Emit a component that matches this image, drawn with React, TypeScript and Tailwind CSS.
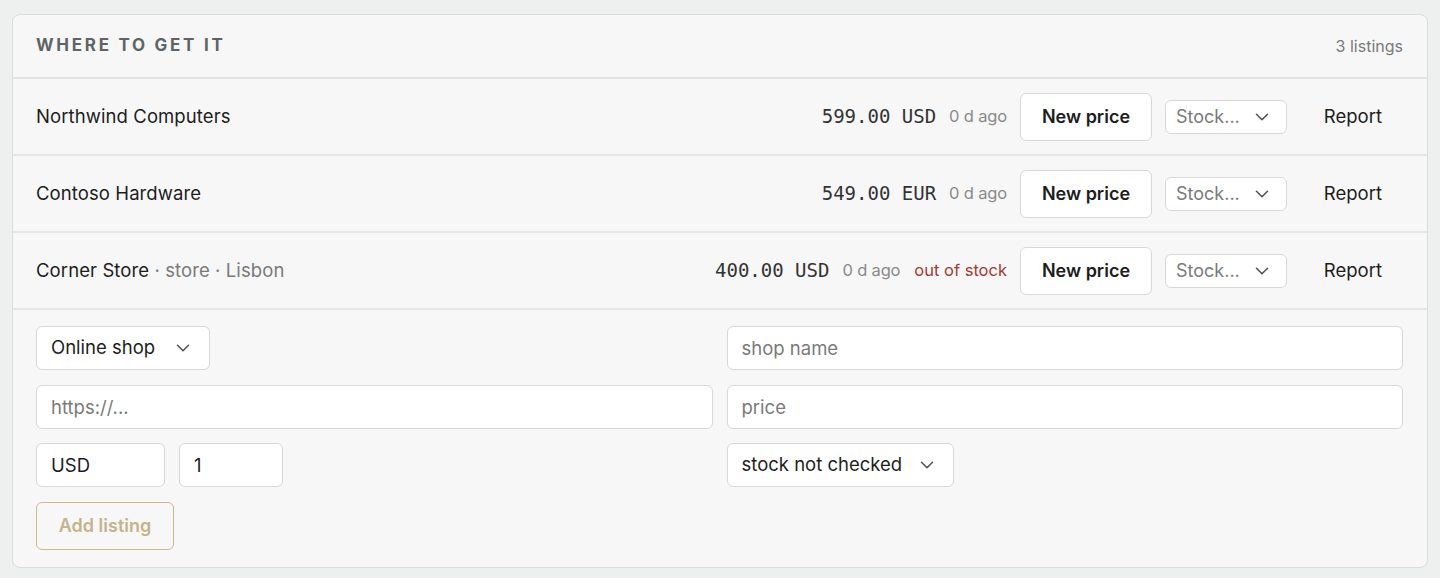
import { ChevronDown } from "lucide-react"

type Listing = {
  name: string
  meta?: string
  price: string
  age: string
  stock?: string
}

const listings: Listing[] = [
  { name: "Northwind Computers", price: "599.00 USD", age: "0 d ago" },
  { name: "Contoso Hardware", price: "549.00 EUR", age: "0 d ago" },
  { name: "Corner Store", meta: " · store · Lisbon", price: "400.00 USD", age: "0 d ago", stock: "out of stock" },
]

const font = { fontFamily: "Inter, 'Liberation Sans', sans-serif" }

function FakeSelect({ label, className, muted }: { label: string; className: string; muted?: boolean }) {
  return (
    <div
      className={`flex items-center justify-between rounded-md border border-[#d8d8d8] bg-white ${className}`}
    >
      <span className={muted ? "text-[#7a7a7a]" : "text-[#1d1d1d]"}>{label}</span>
      <ChevronDown size={22} strokeWidth={1.75} className="text-[#555]" />
    </div>
  )
}

function ListingRow({ item }: { item: Listing }) {
  return (
    <div className="flex h-[77px] items-center justify-between border-b-2 border-[#e6e6e6] pl-[23px] pr-6">
      <div className="text-[18.5px] tracking-[0.005em] text-[#1d1d1d]">
        {item.name}
        {item.meta && <span className="text-[#7a7a7a]">{item.meta}</span>}
      </div>
      <div className="flex items-center">
        <span className="font-['DejaVu_Sans_Mono',monospace] text-[19px] text-[#333]">{item.price}</span>
        <span className="ml-[13px] text-[16.5px] tracking-[-0.01em] text-[#8a8a8a]">{item.age}</span>
        {item.stock && <span className="ml-[14px] text-[16.5px] text-[#a33a2f]">{item.stock}</span>}
        <button className="ml-[13px] h-[48px] w-[132px] rounded-md border border-[#d8d8d8] bg-white text-[18px] font-semibold text-[#1d1d1d]">
          New price
        </button>
        <FakeSelect label="Stock..." muted className="ml-[13px] h-[34px] w-[122px] pl-[10px] pr-[13px] text-[18px]" />
        <button className="ml-[19px] w-[97px] pr-[21px] text-right text-[18.5px] text-[#1d1d1d]">Report</button>
      </div>
    </div>
  )
}

export default function App() {
  return (
    <div style={font} className="min-h-[578px] bg-[#eef0ef] px-3 pt-[14px] pb-[10px]">
      <div className="overflow-hidden rounded-lg border border-[#dcdcdc] bg-[#f7f7f7]">
        {/* header */}
        <div className="flex h-[64px] items-center justify-between border-b-2 border-[#e3e3e3] pl-[23px] pr-6">
          <h2 className="text-[17px] font-bold uppercase tracking-[0.16em] text-[#5d6466]">Where to get it</h2>
          <span className="text-[16px] text-[#7a7a7a]">3 listings</span>
        </div>

        {listings.map((item) => (
          <ListingRow key={item.name} item={item} />
        ))}

        {/* new listing form */}
        <div className="flex flex-col gap-[14.5px] pl-[23px] pr-6 pt-[16px] pb-[17px] text-[18.5px]">
          <div className="grid grid-cols-2 gap-x-[14px]">
            <FakeSelect label="Online shop" className="h-[44px] w-[174px] pl-[14px] pr-[15px]" />
            <input
              placeholder="shop name"
              className="h-[44px] rounded-md border border-[#d8d8d8] bg-white px-[14px] text-[#1d1d1d] placeholder:text-[#7a7a7a]"
            />
          </div>
          <div className="grid grid-cols-2 gap-x-[14px]">
            <input
              placeholder="https://..."
              className="h-[44px] rounded-md border border-[#d8d8d8] bg-white px-[14px] text-[#1d1d1d] placeholder:text-[#7a7a7a]"
            />
            <input
              placeholder="price"
              className="h-[44px] rounded-md border border-[#d8d8d8] bg-white px-[14px] text-[#1d1d1d] placeholder:text-[#7a7a7a]"
            />
          </div>
          <div className="grid grid-cols-2 gap-x-[14px]">
            <div className="flex gap-[14px]">
              <input
                defaultValue="USD"
                className="h-[44px] w-[129px] rounded-md border border-[#d8d8d8] bg-white px-[14px] text-[#1d1d1d]"
              />
              <input
                defaultValue="1"
                className="h-[44px] w-[104px] rounded-md border border-[#d8d8d8] bg-white px-[14px] text-[#1d1d1d]"
              />
            </div>
            <FakeSelect label="stock not checked" className="h-[44px] w-[227px] pl-[14px] pr-[15px]" />
          </div>
          <div>
            <button className="h-[48px] w-[138px] rounded-md border border-[#c9b98c] text-[18px] font-semibold text-[#c4b48a]">
              Add listing
            </button>
          </div>
        </div>
      </div>
    </div>
  )
}
